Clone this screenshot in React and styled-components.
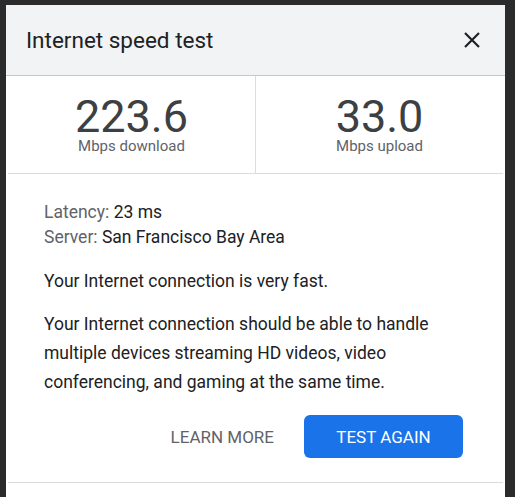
import React from 'react'
import styled, { createGlobalStyle } from 'styled-components'

const Global = createGlobalStyle`
    html, body {
        margin: 0;
        background: #2b2b2b;
        font-family: Roboto, "Liberation Sans", Arial, sans-serif;
    }
`

const stats = [
    { value: '223.6', label: 'Mbps download' },
    { value: '33.0', label: 'Mbps upload' },
]

const App = () => {
    return (
        <>
            <Global />
            <Page>
                <Dialog>
                    <Header>
                        <Title>Internet speed test</Title>
                        <Close aria-label="close">
                            <svg width="16" height="16" viewBox="0 0 16 16">
                                <path d="M1 1L15 15M15 1L1 15" stroke="#202124" strokeWidth="2.2" />
                            </svg>
                        </Close>
                    </Header>
                    <Stats>
                        {stats.map(s => (
                            <Stat key={s.label}>
                                <Value>{s.value}</Value>
                                <Unit>{s.label}</Unit>
                            </Stat>
                        ))}
                    </Stats>
                    <Body>
                        <Info>
                            <p><Label>Latency:</Label> 23 ms</p>
                            <p><Label>Server:</Label> San Francisco Bay Area</p>
                        </Info>
                        <Text>Your Internet connection is very fast.</Text>
                        <Text $gap={14}>Your Internet connection should be able to handle multiple devices streaming HD videos, video conferencing, and gaming at the same time.</Text>
                        <Actions>
                            <TextButton>LEARN MORE</TextButton>
                            <PrimaryButton>TEST AGAIN</PrimaryButton>
                        </Actions>
                    </Body>
                    <Footer />
                </Dialog>
            </Page>
        </>
    )
}

export default App

const Page = styled.div`
    padding: 5px 10px 0 6px;
    height: 497px;
    box-sizing: border-box;
    overflow: hidden;
`
const Dialog = styled.div`
    width: 499px;
    background: #fff;
    color: #202124;
`
const Header = styled.div`
    height: 70px;
    background: #f1f3f4;
    border-bottom: 1px solid #c6c8cb;
    display: flex;
    align-items: center;
    justify-content: space-between;
    padding: 0 25px 0 20px;
`
const Title = styled.h1`
    margin: 0;
    font-size: 22.5px;
    font-weight: 400;
    color: #202124;
`
const Close = styled.button`
    border: none;
    background: none;
    padding: 0;
    display: flex;
    cursor: pointer;
`
const Stats = styled.div`
    display: grid;
    grid-template-columns: 247px 1fr;
    height: 97px;
    margin: 0 2px;
    border-bottom: 1px solid #dadce0;
`
const Stat = styled.div`
    display: flex;
    flex-direction: column;
    align-items: center;
    padding-top: 19px;
    & + & {
        border-left: 1px solid #dadce0;
    }
`
const Value = styled.div`
    font-size: 45px;
    line-height: 44px;
    color: #3c4043;
`
const Unit = styled.div`
    font-size: 15px;
    line-height: 14px;
    color: #5f6368;
`
const Body = styled.div`
    padding: 26px 40px 24px 38px;
    font-size: 17.5px;
`
const Info = styled.div`
    & > p {
        margin: 0;
        line-height: 25px;
    }
`
const Label = styled.span`
    color: #5f6368;
`
const Text = styled.p`
    margin: ${p => p.$gap ?? 17}px 0 0;
    line-height: 29px;
`
const Actions = styled.div`
    display: flex;
    justify-content: flex-end;
    align-items: center;
    gap: 30px;
    margin-top: 18px;
    padding-right: 2px;
`
const TextButton = styled.button`
    border: none;
    background: none;
    padding: 0;
    font: inherit;
    font-size: 17px;
    color: #5f6368;
    cursor: pointer;
`
const PrimaryButton = styled.button`
    width: 159px;
    height: 43px;
    border: none;
    border-radius: 6px;
    background: #1a73e8;
    color: #fff;
    font: inherit;
    font-size: 17px;
    cursor: pointer;
`
const Footer = styled.div`
    margin: 0 2px;
    border-top: 1px solid #dadce0;
    height: 20px;
`
